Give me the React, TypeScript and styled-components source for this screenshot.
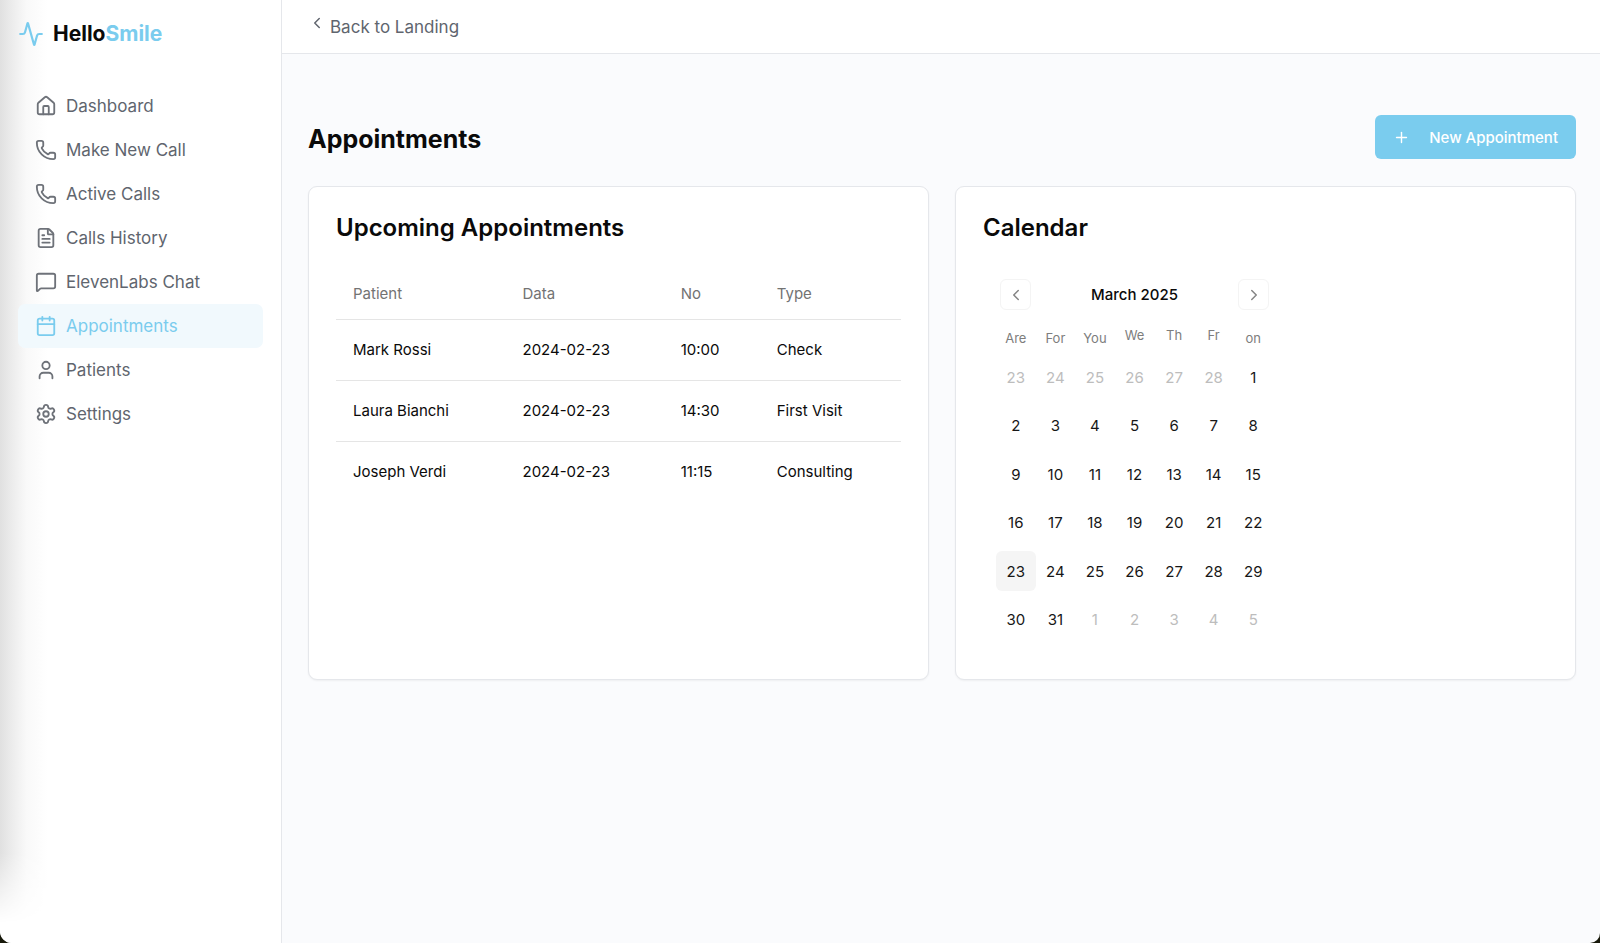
import React from "react";
import styled, { createGlobalStyle, css } from "styled-components";
import {
  Activity,
  Calendar as CalendarIcon,
  ChevronLeft,
  ChevronRight,
  FileText,
  MessageSquare,
  Phone,
  Plus,
  Settings,
  User,
} from "lucide-react";

const GlobalStyle = createGlobalStyle`
  *, *::before, *::after { box-sizing: border-box; }
  body {
    margin: 0;
    background: #17180a;
    color: #0a0a0a;
    font-family: Inter, "Liberation Sans", sans-serif;
    font-size: 15px;
  }
  a { color: inherit; text-decoration: none; }
  button { font: inherit; cursor: pointer; }
  h1, h2, p { margin: 0; }
`;

const Shell = styled.div`
  display: flex;
  min-height: 100vh;
  overflow: hidden;
  background: #fafbfd;
  border-radius: 0 0 10px 12px;
`;

const Sidebar = styled.aside`
  position: relative;
  flex: 0 0 282px;
  padding: 18px;
  background: #fff;
  border-right: 1px solid #e5e7eb;

  &::before {
    content: "";
    position: absolute;
    inset: 0 auto 0 0;
    width: 48px;
    background: linear-gradient(90deg, #e0e0e0, #ececec 25%, #f9f9f9 55%, #fff);
    mask-image: linear-gradient(#000 calc(100% - 90px), transparent calc(100% - 20px));
  }
`;

const Brand = styled.a`
  position: relative;
  display: flex;
  align-items: center;
  gap: 9px;
  height: 32px;
  font-size: 21px;
  line-height: 32px;
  font-weight: 700;
  color: #0a0a0a;

  svg { color: #7accee; }
`;

const BrandAccent = styled.span`
  color: #7accee;
`;

const Nav = styled.nav`
  position: relative;
  display: flex;
  flex-direction: column;
  margin-top: 34px;
`;

const NavLink = styled.a<{ $active?: boolean }>`
  display: flex;
  align-items: center;
  gap: 9px;
  height: 44px;
  padding: 0 17px;
  border-radius: 7px;
  font-size: 17px;
  line-height: 24px;
  color: #60656e;

  svg { color: #6e7279; }

  ${({ $active }) =>
    $active &&
    css`
      color: #7accee;
      background: #f1f9fd;

      svg { color: inherit; }
    `}
`;

const Main = styled.div`
  flex: 1;
  min-width: 0;
`;

const TopBar = styled.header`
  display: flex;
  align-items: center;
  height: 54px;
  padding: 0 26px;
  background: #fff;
  border-bottom: 1px solid #e5e7eb;
`;

const BackLink = styled.a`
  display: flex;
  align-items: flex-start;
  gap: 4px;
  font-size: 17px;
  line-height: 26px;
  color: #60656e;
`;

const Content = styled.main`
  padding: 61px 24px 26px 26px;
`;

const PageHead = styled.div`
  display: flex;
  align-items: flex-end;
  justify-content: space-between;
  margin-bottom: 27px;
`;

const PageTitle = styled.h1`
  font-size: 25px;
  line-height: 40px;
  font-weight: 700;
`;

const PrimaryButton = styled.button`
  display: flex;
  align-items: center;
  gap: 19px;
  height: 44px;
  padding: 0 18px;
  border: 0;
  border-radius: 6px;
  background: #7accee;
  color: #fff;
  font-weight: 500;
`;

const Cards = styled.div`
  display: grid;
  grid-template-columns: 1fr 1fr;
  gap: 26px;
`;

const Card = styled.section`
  padding: 27px;
  min-height: 494px;
  background: #fff;
  border: 1px solid #e5e7eb;
  border-radius: 9px;
  box-shadow: 0 1px 2px rgba(0, 0, 0, 0.05);
`;

const CardTitle = styled.h2`
  font-size: 24px;
  line-height: 28px;
  font-weight: 600;
`;

const AppointmentTable = styled.table`
  width: 100%;
  margin-top: 27px;
  border-collapse: collapse;
  table-layout: fixed;
  line-height: 22px;

  th, td {
    padding: 0 17px;
    text-align: left;
    font-weight: 400;
  }
  th { height: 50px; color: #737373; }
  td { height: 61px; }
  tr { border-bottom: 1px solid #e5e5e5; }
  tbody tr:last-child { border-bottom: 0; }
`;

const Col = styled.col<{ $share: number }>`
  width: ${({ $share }) => $share}%;
`;

const CalendarPanel = styled.div`
  width: 277px;
  margin: 37px 0 0 13px;
`;

const MonthBar = styled.div`
  display: flex;
  align-items: center;
  justify-content: space-between;
  padding: 0 4px;
  font-weight: 500;
`;

const MonthButton = styled.button`
  display: grid;
  place-items: center;
  width: 31px;
  height: 31px;
  padding: 0;
  border: 1px solid #f4f4f4;
  border-radius: 6px;
  background: #fff;
  color: #858585;
`;

const MonthGrid = styled.table`
  display: block;
  width: 100%;

  thead { display: block; }
  tr {
    display: grid;
    grid-template-columns: repeat(7, 1fr);
  }
  tbody {
    display: grid;
    grid-template-rows: repeat(6, 1fr);
    height: 291px;
  }
  td { padding: 0; }
`;

const Weekday = styled.th<{ $translated: boolean }>`
  height: 41px;
  padding: ${({ $translated }) => ($translated ? "18px" : "15px")} 0 0;
  font-size: 13px;
  line-height: 20px;
  font-weight: 400;
  color: #7d7d7d;
`;

const Day = styled.button<{ $outside: boolean; $today: boolean }>`
  display: block;
  width: 100%;
  height: 40px;
  margin-top: 6px;
  padding: 0;
  border: 0;
  border-radius: 6px;
  background: ${({ $today }) => ($today ? "#f5f5f5" : "transparent")};
  color: ${({ $outside }) => ($outside ? "#bdbdbd" : "#171717")};
`;

const HomeIcon = ({ size }: { size: number }) => (
  <svg
    width={size}
    height={size}
    viewBox="0 0 24 24"
    fill="none"
    stroke="currentColor"
    strokeWidth="2"
    strokeLinecap="round"
    strokeLinejoin="round"
    aria-hidden="true"
  >
    <path d="M15 21v-8a1 1 0 0 0-1-1h-4a1 1 0 0 0-1 1v8" />
    <path d="M3 10a2 2 0 0 1 .709-1.528l7-5.999a2 2 0 0 1 2.582 0l7 5.999A2 2 0 0 1 21 10v9a2 2 0 0 1-2 2H5a2 2 0 0 1-2-2z" />
  </svg>
);

const navItems = [
  { label: "Dashboard", icon: HomeIcon },
  { label: "Make New Call", icon: Phone },
  { label: "Active Calls", icon: Phone },
  { label: "Calls History", icon: FileText },
  { label: "ElevenLabs Chat", icon: MessageSquare },
  { label: "Appointments", icon: CalendarIcon, active: true },
  { label: "Patients", icon: User },
  { label: "Settings", icon: Settings },
];

const appointments = [
  { patient: "Mark Rossi", date: "2024-02-23", time: "10:00", type: "Check" },
  { patient: "Laura Bianchi", date: "2024-02-23", time: "14:30", type: "First Visit" },
  { patient: "Joseph Verdi", date: "2024-02-23", time: "11:15", type: "Consulting" },
];

const weekdays = [
  { label: "Are", translated: true },
  { label: "For", translated: true },
  { label: "You", translated: true },
  { label: "We", translated: false },
  { label: "Th", translated: false },
  { label: "Fr", translated: false },
  { label: "on", translated: true },
];

const firstCell = new Date(2025, 1, 23);
const weeks = Array.from({ length: 6 }, (_, w) =>
  Array.from({ length: 7 }, (_, d) => {
    const date = new Date(firstCell);
    date.setDate(firstCell.getDate() + w * 7 + d);
    return {
      day: date.getDate(),
      outside: date.getMonth() !== 2,
      today: date.getMonth() === 2 && date.getDate() === 23,
    };
  })
);

export default function App() {
  return (
    <>
      <GlobalStyle />
      <Shell>
        <Sidebar>
          <Brand href="#">
            <Activity size={26} />
            <span>
              Hello<BrandAccent>Smile</BrandAccent>
            </span>
          </Brand>
          <Nav>
            {navItems.map(({ label, icon: Icon, active }) => (
              <NavLink key={label} href="#" $active={active}>
                <Icon size={22} />
                {label}
              </NavLink>
            ))}
          </Nav>
        </Sidebar>
        <Main>
          <TopBar>
            <BackLink href="#">
              <ChevronLeft size={18} />
              Back to Landing
            </BackLink>
          </TopBar>
          <Content>
            <PageHead>
              <PageTitle>Appointments</PageTitle>
              <PrimaryButton type="button">
                <Plus size={17} strokeWidth={2} />
                New Appointment
              </PrimaryButton>
            </PageHead>
            <Cards>
              <Card>
                <CardTitle>Upcoming Appointments</CardTitle>
                <AppointmentTable>
                  <colgroup>
                    <Col $share={30} />
                    <Col $share={28} />
                    <Col $share={17} />
                    <Col $share={25} />
                  </colgroup>
                  <thead>
                    <tr>
                      <th scope="col">Patient</th>
                      <th scope="col">Data</th>
                      <th scope="col">No</th>
                      <th scope="col">Type</th>
                    </tr>
                  </thead>
                  <tbody>
                    {appointments.map((a) => (
                      <tr key={a.patient}>
                        <td>{a.patient}</td>
                        <td>{a.date}</td>
                        <td>{a.time}</td>
                        <td>{a.type}</td>
                      </tr>
                    ))}
                  </tbody>
                </AppointmentTable>
              </Card>
              <Card>
                <CardTitle>Calendar</CardTitle>
                <CalendarPanel>
                  <MonthBar>
                    <MonthButton type="button" aria-label="Previous month">
                      <ChevronLeft size={18} />
                    </MonthButton>
                    March 2025
                    <MonthButton type="button" aria-label="Next month">
                      <ChevronRight size={18} />
                    </MonthButton>
                  </MonthBar>
                  <MonthGrid>
                    <thead>
                      <tr>
                        {weekdays.map((w) => (
                          <Weekday key={w.label} scope="col" $translated={w.translated}>
                            {w.label}
                          </Weekday>
                        ))}
                      </tr>
                    </thead>
                    <tbody>
                      {weeks.map((week, i) => (
                        <tr key={i}>
                          {week.map((d) => (
                            <td key={d.day}>
                              <Day type="button" $outside={d.outside} $today={d.today}>
                                {d.day}
                              </Day>
                            </td>
                          ))}
                        </tr>
                      ))}
                    </tbody>
                  </MonthGrid>
                </CalendarPanel>
              </Card>
            </Cards>
          </Content>
        </Main>
      </Shell>
    </>
  );
}
